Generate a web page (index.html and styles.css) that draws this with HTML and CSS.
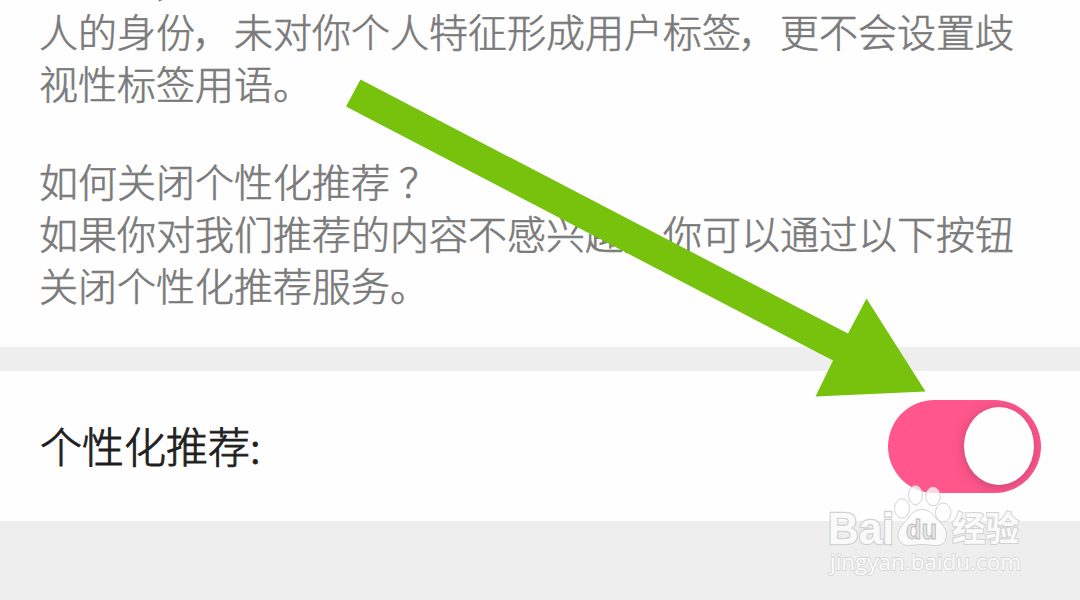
FILE: index.html
```html
<!DOCTYPE html>
<html lang="zh-CN">
<head>
    <meta charset="UTF-8">
    <meta name="viewport" content="width=device-width, initial-scale=1.0">
    <title>个性化推荐</title>
    <link rel="stylesheet" href="styles.css">
</head>
<body>
    <div class="page">
        <div class="intro">
            <p class="cut-line">，</p>
            <p>人的身份<span class="punct">，</span>未对你个人特征形成用户标签<span class="punct">，</span>更不会设置歧<br>视性标签用语。</p>
            <p class="question">如何关闭个性化推荐<span class="mark-center">？</span><br>如果你对我们推荐的内容不感兴趣<span class="punct">，</span>你可以通过以下按钮<br>关闭个性化推荐服务。</p>
        </div>

        <div class="setting">
            <span class="setting-label">个性化推荐:</span>
            <span class="switch"><span class="knob"></span></span>
        </div>

        <!-- arrow pointing at the switch -->
        <svg class="arrow" viewBox="0 0 1080 600">
            <polygon points="360.5,79.5 848,333.5 866.5,298.5 925.5,391.5 815.5,396.5 833,360.5 346,106.5" fill="#76c20d"/>
        </svg>

        <!-- watermark -->
        <svg class="watermark" viewBox="0 0 230 120">
            <g class="mark">
                <text class="bai" x="18" y="74" textLength="66" lengthAdjust="spacingAndGlyphs">Bai</text>
                <ellipse cx="92" cy="38.5" rx="7.5" ry="9.7"/>
                <ellipse cx="105.5" cy="25.2" rx="7" ry="9.5"/>
                <ellipse cx="123" cy="26.5" rx="7.2" ry="9.3"/>
                <ellipse cx="133.2" cy="42.5" rx="7.7" ry="9.5"/>
                <path d="M112 39.5c6 0 10 3 13 7.500c3.500 5 11.500 9 11.500 18c0 7-4.500 10.500-10 10.500c-6 0-8-1-14.500-1s-8 1-13.500 1c-6 0-10.500-4-10.500-10.500c0-8 8-13 11-18c3-4.500 7-7.500 13-7.500z"/>
                <text class="jingyan" x="142" y="71" textLength="67" lengthAdjust="spacingAndGlyphs">经验</text>
            </g>
            <text class="url" x="20" y="100" textLength="191">jingyan.baidu.com</text>
            <text class="du" x="96" y="69" textLength="31" lengthAdjust="spacingAndGlyphs">du</text>
        </svg>
    </div>
</body>
</html>
```
FILE: styles.css
```css
body {
    margin: 0;
    background-color: #eeeeee;
    font-family: "Noto Sans CJK SC", sans-serif;
}
.page {
    position: relative;
    height: 600px;
    overflow: hidden;
}
.intro {
    box-sizing: border-box;
    height: 347px;
    padding-left: 39px;
    background-color: #fefefe;
    color: #7a7a7a;
    font-size: 39px;
    font-weight: 300;
    line-height: 52px;
    white-space: nowrap;
    overflow: hidden;
    -webkit-text-stroke: 0.6px #7a7a7a;
}
.intro p {
    margin: 0;
}
.intro .cut-line {
    margin-top: -46px;
    margin-bottom: -2px;
    text-indent: 115px;
}
.intro .question {
    margin-top: 46px;
}
.punct {
    margin: 0 3px 0 -3px;
}
.mark-center {
    padding-left: 9px;
}
.setting {
    display: flex;
    align-items: center;
    justify-content: space-between;
    box-sizing: border-box;
    height: 150px;
    margin-top: 24px;
    padding: 0 39px 0 40px;
    background-color: #fefefe;
}
.setting-label {
    padding-bottom: 4px;
    color: #1f1f1f;
    font-size: 42px;
    font-weight: 300;
    -webkit-text-stroke: 0.9px #1f1f1f;
}
.switch {
    display: flex;
    align-items: center;
    justify-content: flex-end;
    box-sizing: border-box;
    width: 153px;
    height: 93px;
    padding-right: 7px;
    border-radius: 47px;
    background-color: #ff568b;
    overflow: hidden;
}
.knob {
    width: 70px;
    height: 78px;
    border-radius: 50%;
    background-color: #fefefe;
    box-shadow: 0 2px 12px rgba(110, 50, 80, 0.4);
}
.arrow {
    position: absolute;
    top: 0;
    left: 0;
    width: 1080px;
    height: 600px;
}
.watermark {
    position: absolute;
    top: 470px;
    left: 810px;
    width: 230px;
    height: 120px;
}
.mark {
    fill: rgba(255, 255, 255, 0.75);
    stroke: #d2d2d2;
    stroke-width: 1;
}
.bai {
    fill: #fafafa;
    stroke-width: 2.6;
    paint-order: stroke;
    font: bold 45px "Liberation Sans", sans-serif;
}
.jingyan {
    fill: #fafafa;
    stroke-width: 2;
    paint-order: stroke;
    font: bold 34px "Noto Sans CJK SC", sans-serif;
}
.url {
    fill: #fbfbfb;
    stroke: #d8d8d8;
    stroke-width: 1.8;
    paint-order: stroke;
    font: 22.5px "Open Sans", sans-serif;
}
.du {
    fill: #e6e6e6;
    stroke: #bdbdbd;
    stroke-width: 1;
    font: bold 27px "Liberation Sans", sans-serif;
}
```
